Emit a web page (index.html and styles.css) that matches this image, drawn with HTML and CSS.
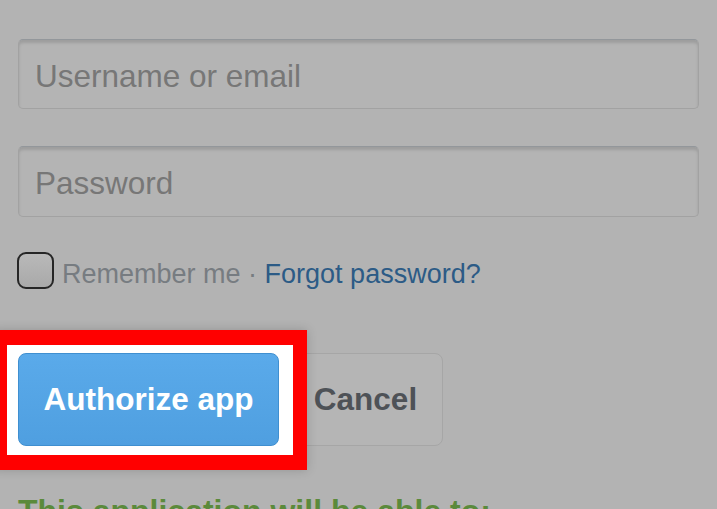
FILE: index.html
```html
<!DOCTYPE html>
<html>
<head>
<meta charset="utf-8">
<link rel="stylesheet" href="styles.css">
</head>
<body>
<div class="page">
  <input class="field field-first" type="text" placeholder="Username or email">
  <input class="field field-second" type="password" placeholder="Password">
  <div class="remember">
    <span class="checkbox"></span>
    <span class="remember-text">
      <span class="remember-label">Remember me</span>
      <span class="sep">·</span>
      <a class="forgot" href="#">Forgot password?</a>
    </span>
  </div>
  <div class="actions">
    <div class="primary-wrap">
      <div class="highlight"></div>
      <button class="btn btn-primary">Authorize app</button>
    </div>
    <button class="btn btn-cancel">Cancel</button>
  </div>
  <h2 class="scope-title">This application will be able to:</h2>
</div>
</body>
</html>
```
FILE: styles.css
```css
html, body {
  margin: 0;
  padding: 0;
  background: #b3b3b3;
  overflow: hidden;
  height: 509px;
}
.page {
  padding: 0 18px;
  font-family: "Liberation Sans", Arial, sans-serif;
}
.field {
  display: block;
  box-sizing: border-box;
  width: 100%;
  height: 70px;
  margin: 0;
  padding: 4px 16px 0;
  border: 1px solid #a2a2a2;
  border-top-color: #93979b;
  border-radius: 5px;
  background: #b4b4b4;
  box-shadow: inset 0 3px 3px rgba(0,0,0,0.13);
  font-family: "Liberation Sans", Arial, sans-serif;
  font-size: 31.5px;
  color: #555;
  outline: none;
}
.field::placeholder {
  color: #777777;
}
.field-first { margin-top: 39px; }
.field-second { margin-top: 37px; height: 71px; }
.remember {
  display: flex;
  align-items: center;
  margin-top: 35px;
  height: 37px;
  font-size: 27px;
}
.checkbox {
  box-sizing: border-box;
  width: 37px;
  height: 37px;
  margin-left: -1px;
  border: 2.5px solid #262626;
  border-radius: 9px;
  background: linear-gradient(#b9b9b9, #a9a9a9);
}
.remember-text {
  margin-left: 8px;
  padding-top: 7px;
  white-space: nowrap;
}
.remember-label {
  color: #777c81;
}
.sep {
  color: #777c81;
}
.forgot {
  color: #2c5b86;
  text-decoration: none;
}
.actions {
  display: flex;
  margin-top: 64px;
  gap: 9px;
}
.primary-wrap {
  position: relative;
}
.highlight {
  position: absolute;
  left: -25px;
  top: -23px;
  width: 314px;
  height: 140px;
  box-sizing: border-box;
  border: 14px solid #ff0000;
  border-top-width: 15px;
  border-bottom-width: 15px;
  background: #ffffff;
  box-shadow: 0 0 10px rgba(0,0,0,0.18);
  z-index: 0;
}
.btn {
  box-sizing: border-box;
  height: 93px;
  margin: 0;
  border-radius: 8px;
  font-family: "Liberation Sans", Arial, sans-serif;
  font-weight: bold;
  font-size: 31.5px;
  padding: 0;
}
.btn-primary {
  position: relative;
  z-index: 1;
  width: 261px;
  border: 1px solid #3f8fd0;
  background: linear-gradient(#5aaaea, #4f9fe0);
  color: #ffffff;
}
.btn-cancel {
  width: 155px;
  border: 1px solid #a6a6a6;
  background: #b5b5b5;
  color: #4e5257;
}
.scope-title {
  margin: 45px 0 0;
  font-size: 32px;
  line-height: 40px;
  font-weight: bold;
  color: #5b8a3b;
  white-space: nowrap;
}
```
